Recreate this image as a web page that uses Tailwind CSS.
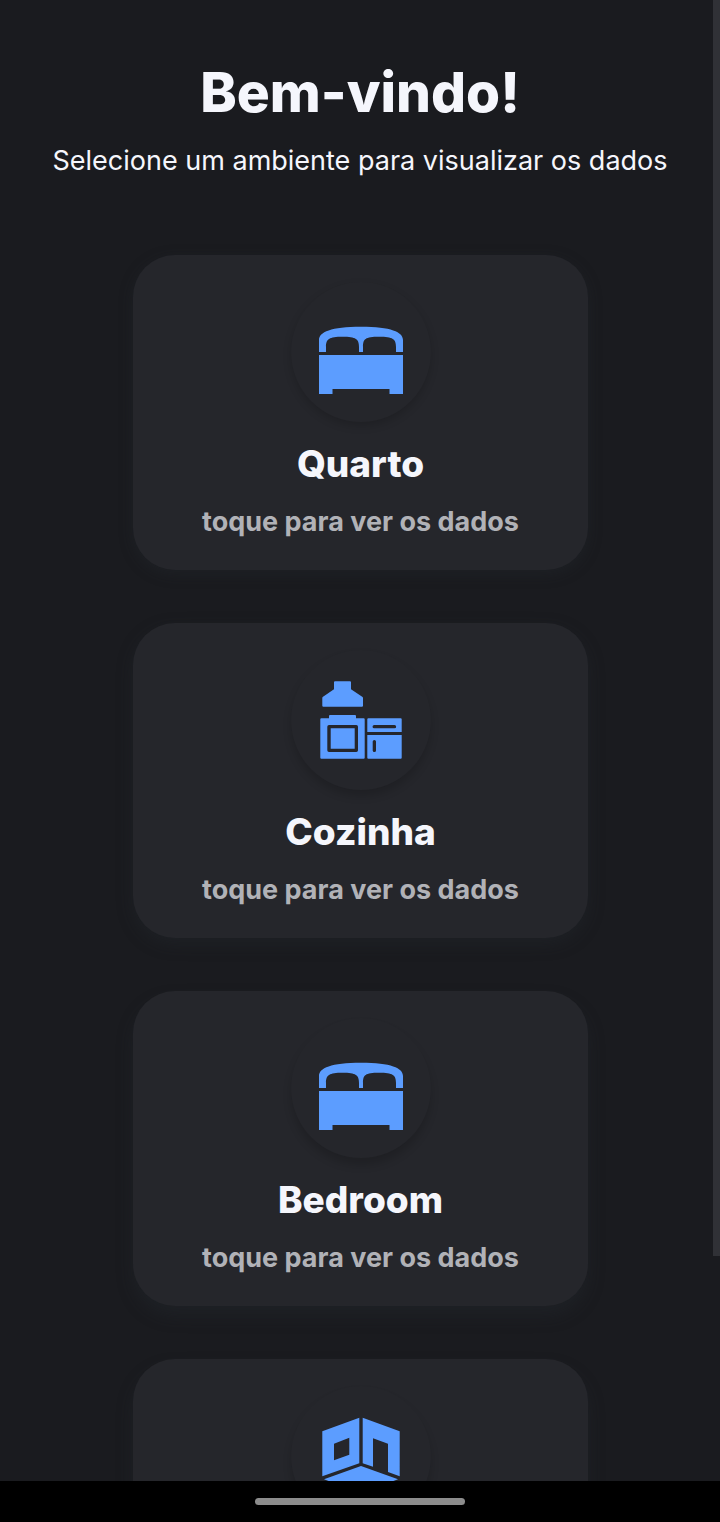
<!DOCTYPE html>
<html lang="pt-BR">
<head>
<meta charset="utf-8">
<meta name="viewport" content="width=device-width, initial-scale=1">
<title>Bem-vindo!</title>
<script src="https://cdn.jsdelivr.net/npm/@tailwindcss/browser@4"></script>
</head>
<body class="flex h-screen flex-col overflow-hidden bg-black font-['Inter',sans-serif] text-[#f5f6fc]">
<main class="relative min-h-0 flex-1 overflow-hidden bg-[#1a1b1f]">
  <header class="px-4 pt-14 text-center">
    <h1 class="text-[55px] leading-[72px] font-extrabold">Bem-vindo!</h1>
    <p class="mt-3 text-[27px] leading-[42px]">Selecione um ambiente para visualizar os dados</p>
  </header>
  <section class="mx-auto mt-[73px] flex w-[63.2%] flex-col gap-[53px] pl-px" aria-label="Ambientes">
    <button type="button" class="flex w-full shrink-0 flex-col items-center rounded-[42px] bg-[#25262b] pt-[27px] pb-7 shadow-[0_4px_14px_rgba(37,44,48,0.35)]">
      <span class="flex size-[140px] items-center justify-center rounded-full bg-[#25262b] shadow-[0_4px_8px_rgba(0,0,0,0.16)]">
        <svg class="size-[84px]" viewBox="0 0 84 84" fill="#5c9dff" aria-hidden="true"><path d="M0 42V30C0 22 12 16.7 42 16.7S84 22 84 30V42H77V37C77 29 74 26.7 60 26.7S44 29 44 37V42H40V37C40 29 37 26.7 23.5 26.7S7 29 7 37V42ZM0 45H84V84H70.5V79H13.5V84H0Z"/></svg>
      </span>
      <span class="mt-[18px] text-[37px] leading-[48px] font-extrabold">Quarto</span>
      <span class="mt-3.5 text-[27px] leading-10 font-bold text-[#b1b2b7]">toque para ver os dados</span>
    </button>
    <button type="button" class="flex w-full shrink-0 flex-col items-center rounded-[42px] bg-[#25262b] pt-[27px] pb-7 shadow-[0_6px_16px_rgba(37,44,48,0.35)]">
      <span class="flex size-[140px] items-center justify-center rounded-full bg-[#25262b] shadow-[0_6px_8px_rgba(0,0,0,0.16)]">
        <svg class="size-[84px]" viewBox="0 0 84 84" fill="#5c9dff" aria-hidden="true">
          <path d="M16 3.3H31Q32 3.3 32 4.3V11.3L43.2 18.8Q44 19.3 44 20V27.7Q44 28.7 43 28.7H4.3Q3.3 28.7 3.3 27.7V20Q3.3 19.3 4 18.8L15 11.3V4.3Q15 3.3 16 3.3Z"/>
          <path fill-rule="evenodd" d="M2.3 40.3H10V38Q10 37 11 37H36Q37 37 37 38V40.3H44.7Q45.7 40.3 45.7 41.3V79.7Q45.7 80.7 44.7 80.7H2.3Q1.3 80.7 1.3 79.7V41.3Q1.3 40.3 2.3 40.3ZM10 47Q8.3 47 8.3 48.7V72.3Q8.3 74 10 74H37.3Q39 74 39 72.3V48.7Q39 47 37.3 47ZM11.7 50.3H35.7V70.7H11.7Z"/>
          <path fill-rule="evenodd" d="M49.3 40.3H81.7Q82.7 40.3 82.7 41.3V54H48.3V41.3Q48.3 40.3 49.3 40.3ZM55.2 47A1.6 1.6 0 0 0 55.2 50.3H75.5A1.6 1.6 0 0 0 75.5 47ZM48.3 57H82.7V79.7Q82.7 80.7 81.7 80.7H49.3Q48.3 80.7 48.3 79.7ZM53.7 63.6V72.4A1.6 1.6 0 0 0 57 72.4V63.6A1.6 1.6 0 0 0 53.7 63.6Z"/>
        </svg>
      </span>
      <span class="mt-[18px] text-[37px] leading-[48px] font-extrabold">Cozinha</span>
      <span class="mt-3.5 text-[27px] leading-10 font-bold text-[#b1b2b7]">toque para ver os dados</span>
    </button>
    <button type="button" class="flex w-full shrink-0 flex-col items-center rounded-[42px] bg-[#25262b] pt-[27px] pb-7 shadow-[0_10px_16px_rgba(37,44,48,0.35)]">
      <span class="flex size-[140px] items-center justify-center rounded-full bg-[#25262b] shadow-[0_7px_8px_rgba(0,0,0,0.16)]">
        <svg class="size-[84px]" viewBox="0 0 84 84" fill="#5c9dff" aria-hidden="true"><path d="M0 42V30C0 22 12 16.7 42 16.7S84 22 84 30V42H77V37C77 29 74 26.7 60 26.7S44 29 44 37V42H40V37C40 29 37 26.7 23.5 26.7S7 29 7 37V42ZM0 45H84V84H70.5V79H13.5V84H0Z"/></svg>
      </span>
      <span class="mt-[18px] text-[37px] leading-[48px] font-extrabold">Bedroom</span>
      <span class="mt-3.5 text-[27px] leading-10 font-bold text-[#b1b2b7]">toque para ver os dados</span>
    </button>
    <button type="button" aria-label="Ambiente" class="flex w-full shrink-0 flex-col items-center rounded-[42px] bg-[#25262b] pt-[27px] pb-7 shadow-[0_10px_16px_rgba(37,44,48,0.35)]">
      <span class="flex size-[140px] items-center justify-center rounded-full bg-[#25262b] shadow-[0_7px_8px_rgba(0,0,0,0.16)]">
        <svg class="size-[84px]" viewBox="0 0 84 84" fill="#5c9dff" fill-rule="evenodd" aria-hidden="true"><path d="M40.3 3.7V49.3L3.3 62.3V17.3ZM15 29.7V46.3L30.3 40.7V23.7ZM43.7 3.7L80.7 17.3V62.3L69 58V29.7L54 24.3V52.7L43.7 49.3ZM42 52L79 65.3L42 79L5 65.3Z"/></svg>
      </span>
    </button>
  </section>
  <div class="absolute top-0 right-0 h-[84.8%] w-[7px] bg-[#303136]"></div>
</main>
<footer class="flex h-[41px] shrink-0 items-center justify-center bg-black">
  <div class="h-[7px] w-[210px] rounded-full bg-[#8c8c8c]"></div>
</footer>
</body>
</html>
